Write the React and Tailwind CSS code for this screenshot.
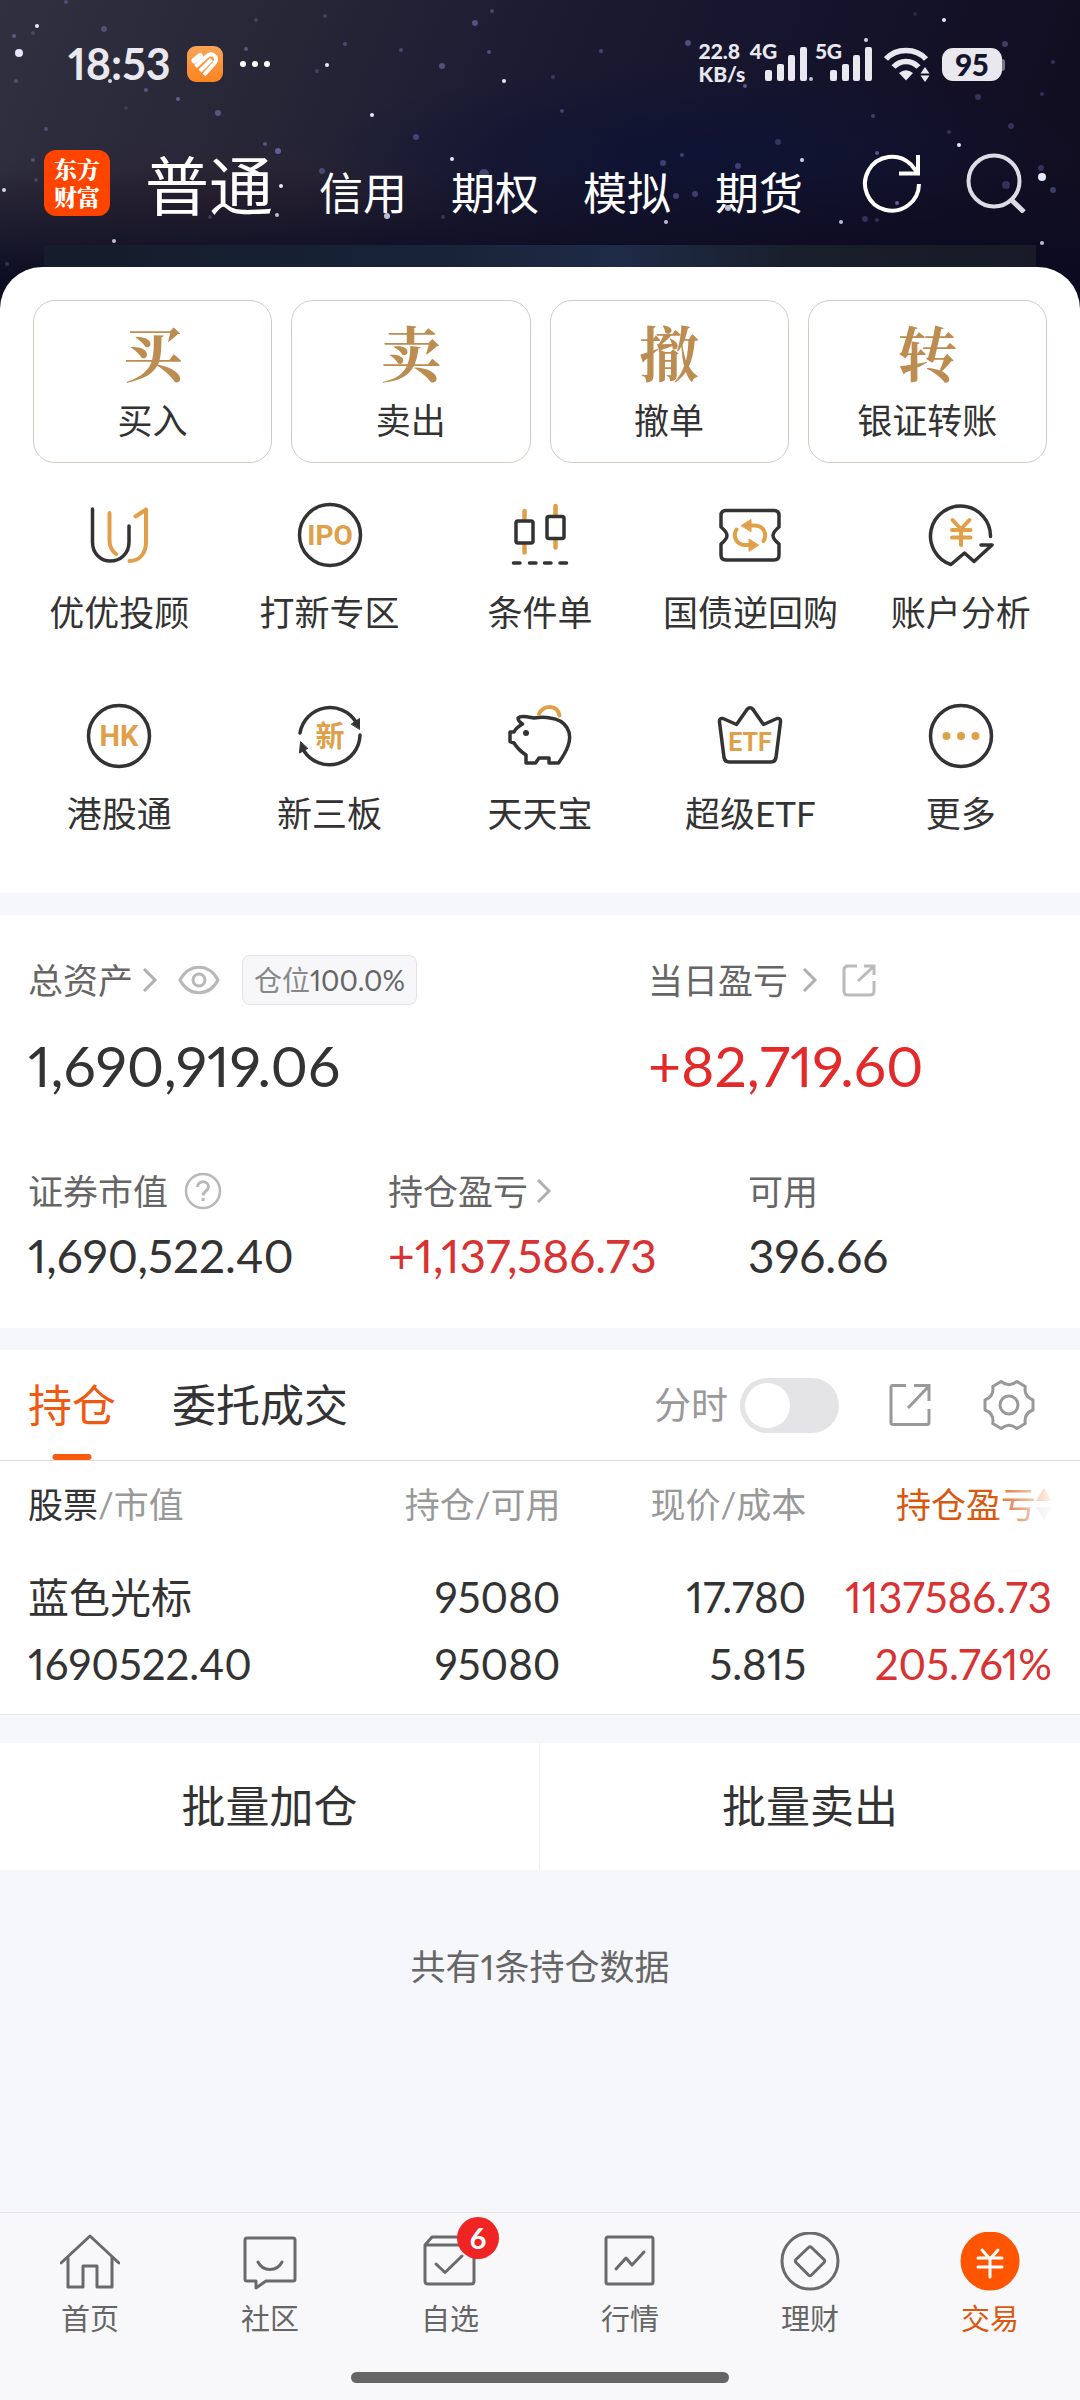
import React from "react";

const DARK = "#333333";
const GOLD = "#e0a04a";

const STARS = [
  [19, 53, 4, 1], [37, 26, 2, 1], [104, 29, 3, 0.4], [66, 2, 2, 0.4], [14, 36, 2, 0.5], [33, 33, 2, 0.3], [16, 81, 2, 0.4],
  [110, 81, 2, 0.9], [146, 90, 2, 0.5], [178, 99, 2, 0.6], [218, 113, 3, 0.5], [46, 129, 2, 0.4], [126, 108, 2, 0.2],
  [256, 20, 2, 0.3], [246, 49, 2, 0.5], [327, 65, 2, 1], [317, 71, 2, 0.3], [345, 44, 2, 0.4], [325, 16, 2, 0.3],
  [401, 50, 2, 0.4], [442, 66, 3, 0.5], [504, 81, 2, 1], [475, 23, 3, 0.5], [492, 11, 2, 0.4], [489, 52, 2, 0.5],
  [372, 115, 2, 1], [416, 137, 3, 0.4], [452, 159, 2, 1], [278, 151, 3, 0.6], [265, 144, 2, 0.5], [281, 186, 2, 1],
  [322, 171, 3, 0.4], [387, 216, 3, 0.8], [277, 215, 2, 0.8], [210, 217, 2, 0.3], [114, 241, 2, 0.8], [4, 190, 2, 0.9],
  [33, 160, 2, 0.4], [36, 180, 2, 0.3], [484, 174, 5, 0.4], [443, 217, 2, 0.3], [688, 43, 3, 0.5], [601, 51, 2, 0.4],
  [745, 86, 2, 0.6], [811, 79, 2, 0.8], [866, 40, 2, 0.9], [944, 20, 2, 1], [1005, 44, 3, 0.4], [915, 14, 2, 0.2],
  [1053, 62, 2, 0.3], [978, 97, 3, 0.3], [778, 142, 3, 0.3], [802, 160, 2, 0.9], [877, 153, 2, 0.6], [959, 145, 2, 1],
  [1042, 177, 4, 1], [1053, 190, 3, 0.4], [1041, 168, 3, 0.3], [682, 155, 2, 0.4], [663, 163, 3, 0.4], [738, 166, 3, 0.4],
  [695, 194, 3, 0.4], [676, 196, 3, 0.4], [666, 222, 2, 0.8], [841, 222, 2, 0.8], [865, 219, 3, 0.3], [877, 220, 2, 0.3],
  [728, 208, 3, 0.8], [897, 203, 2, 0.7], [1042, 243, 2, 0.8], [562, 111, 2, 0.4], [873, 116, 2, 0.4], [1011, 126, 3, 0.3],
  [1042, 94, 2, 0.3], [949, 132, 2, 0.3], [1006, 185, 4, 0.3], [553, 77, 2, 0.3], [7, 264, 2, 0.3],
];

function NightSky() {
  return (
    <svg className="absolute inset-0 h-full w-full" viewBox="0 0 1080 309" preserveAspectRatio="xMidYMid slice" aria-hidden="true">
      <defs>
        <linearGradient id="sky" x1="0" y1="0" x2="1" y2="0.12">
          <stop offset="0" stopColor="#30303f" />
          <stop offset="0.28" stopColor="#272637" />
          <stop offset="0.5" stopColor="#1c1b32" />
          <stop offset="0.75" stopColor="#15142c" />
          <stop offset="1" stopColor="#120e22" />
        </linearGradient>
        <linearGradient id="dusk" x1="0" y1="0" x2="0" y2="1">
          <stop offset="0.55" stopColor="#0a0a20" stopOpacity="0" />
          <stop offset="0.9" stopColor="#0a0a20" stopOpacity="0.9" />
        </linearGradient>
        <radialGradient id="blue">
          <stop offset="0" stopColor="#0d1334" stopOpacity="0.9" />
          <stop offset="1" stopColor="#0d1334" stopOpacity="0" />
        </radialGradient>
        <radialGradient id="ember">
          <stop offset="0" stopColor="#2c222f" stopOpacity="0.8" />
          <stop offset="1" stopColor="#2c222f" stopOpacity="0" />
        </radialGradient>
        <linearGradient id="strip" x1="0" y1="0" x2="1" y2="0">
          <stop offset="0" stopColor="#151c2b" />
          <stop offset="0.4" stopColor="#182338" />
          <stop offset="0.58" stopColor="#1e2b47" />
          <stop offset="0.75" stopColor="#191f2c" />
          <stop offset="1" stopColor="#181b27" />
        </linearGradient>
      </defs>
      <rect width="1080" height="309" fill="url(#sky)" />
      <ellipse cx="700" cy="155" rx="380" ry="90" fill="url(#blue)" />
      <ellipse cx="200" cy="200" rx="260" ry="60" fill="url(#ember)" />
      <rect width="1080" height="309" fill="url(#dusk)" />
      <rect x="44" y="245" width="992" height="64" fill="url(#strip)" />
      {STARS.map(([x, y, r, o]) => (
        <circle key={`${x}-${y}`} cx={x} cy={y} r={r} fill={o > 0.7 ? "#e6e8ff" : "#8585cc"} opacity={o} />
      ))}
    </svg>
  );
}

function SignalBars() {
  return (
    <svg width="42" height="34" viewBox="0 0 42 34" fill="#e9e8ee" aria-hidden="true">
      <rect x="0" y="23" width="7" height="11" rx="2" />
      <rect x="12" y="17" width="7" height="17" rx="2" />
      <rect x="23" y="8" width="7" height="26" rx="2" />
      <rect x="35" y="0" width="7" height="34" rx="2" />
    </svg>
  );
}

function StatusBar() {
  return (
    <div className="flex h-11 items-center pr-[75px] pl-[68px] text-[#e9e8ee]">
      <span className="text-[43px] leading-[44px] font-bold">18:53</span>
      <svg className="ml-4" width="36" height="36" viewBox="0 0 36 36" aria-hidden="true">
        <defs>
          <linearGradient id="app" x1="0" y1="0" x2="0" y2="1">
            <stop offset="0" stopColor="#f9a456" />
            <stop offset="1" stopColor="#fb8420" />
          </linearGradient>
        </defs>
        <rect width="36" height="36" rx="9" fill="url(#app)" />
        <g fill="none" stroke="#fff" strokeWidth="4" strokeLinecap="butt">
          <path d="M7.500 14.500 L13 10" strokeWidth="6" strokeLinecap="round" />
          <path d="M8.500 20.500 L19.500 10.500 C24 6 32 10 28 16.500 L17 29" />
          <path d="M13 25 L24.500 13.500" />
        </g>
      </svg>
      <svg className="ml-4" width="32" height="8" viewBox="0 0 32 8" fill="#fff" aria-hidden="true">
        <circle cx="4" cy="4" r="3" />
        <circle cx="16" cy="4" r="3" />
        <circle cx="28" cy="4" r="3" />
      </svg>
      <div className="ml-auto flex items-start">
        <div className="-mt-1 text-[21px] leading-[23px] font-black">
          <div>22.8</div>
          <div>KB/s</div>
        </div>
        <div className="-mt-1 ml-1 text-[21px] leading-[23px] font-black">4G</div>
        <div className="-ml-3 pt-1"><SignalBars /></div>
        <div className="-mt-1 ml-2 text-[21px] leading-[23px] font-black">5G</div>
        <div className="-ml-3 pt-1"><SignalBars /></div>
        <svg className="mt-1 ml-3" width="46" height="35" viewBox="0 0 46 35" aria-hidden="true">
          <g fill="none" stroke="#e9e8ee" strokeWidth="5.500">
            <path d="M2 12 C12 0.500 32 0.500 42 12" />
            <path d="M9.500 20 C16 12.500 28 12.500 34.500 20" />
          </g>
          <path d="M15 26 Q22 20.500 29 26 L22 33.500Z" fill="#e9e8ee" />
          <path d="M41 20 L45.500 26.500 H36.500Z M41 35 L45.500 28.500 H36.500Z" fill="#e9e8ee" />
        </svg>
        <div className="mt-[5px] ml-3 flex items-center">
          <span className="flex h-[33px] w-[60px] items-center justify-center rounded-[11px] bg-[#e9e8ee] text-[30px] leading-[33px] font-black text-[#14152d]">95</span>
          <span className="h-3 w-[3px] rounded-r-sm bg-[#77768a]" />
        </div>
      </div>
    </div>
  );
}

function Header() {
  return (
    <header className="relative bg-[#11122d] pt-[42px] pb-[90px]">
      <NightSky />
      <div className="relative">
        <StatusBar />
        <div className="mt-[61px] flex h-[72px] items-center pr-[54px] pl-11 text-white">
          <div className="flex size-[66px] shrink-0 flex-col items-center justify-center rounded-xl bg-[#ff4400] font-[Lato,'Noto_Serif_CJK_SC','Noto_Sans_CJK_SC',serif] text-[23px] leading-[28px] font-black">
            <span>东方</span>
            <span>财富</span>
          </div>
          <nav className="ml-[35px] flex items-baseline gap-11 pt-3 text-[44px] leading-[72px]">
            <a href="#normal" className="mr-[2px] text-[64px]">普通</a>
            <a href="#credit">信用</a>
            <a href="#option">期权</a>
            <a href="#sim">模拟</a>
            <a href="#future">期货</a>
          </nav>
          <button type="button" aria-label="刷新" className="ml-auto">
            <svg width="60" height="60" viewBox="0 0 60 60" fill="none" stroke="#fff" strokeWidth="4">
              <path d="M57 31 A27 27 0 1 1 49 11.500 L55 19" />
              <path d="M56 2 V20.500 H37" />
            </svg>
          </button>
          <button type="button" aria-label="搜索" className="ml-[44px]">
            <svg width="60" height="60" viewBox="0 0 60 60" fill="none" stroke="#dddce4" strokeWidth="4">
              <circle cx="28" cy="28" r="25.500" />
              <path d="M45 46.500 L58 59" strokeWidth="5" />
            </svg>
          </button>
        </div>
      </div>
    </header>
  );
}

const ACTIONS = [
  ["买", "买入"],
  ["卖", "卖出"],
  ["撤", "撤单"],
  ["转", "银证转账"],
];

const IconText = ({ size, y, children }) => (
  <text x="0" y={y} textAnchor="middle" fontSize={size} fontWeight="700" fontFamily='Roboto, "Noto Sans CJK SC", sans-serif' fill={GOLD} stroke="none">
    {children}
  </text>
);

const TOOLS = [
  ["优优投顾", (
    <>
      <path d="M-26.500-26V7C-26.500 19-18 26-8.500 26S10 19 10 7V-9" />
      <path stroke={GOLD} strokeWidth="4" d="M-9.500-22V5C-9.500 12-7 16-3 19M16.500-18.500L27-25.500V7C27 19 20 26 10.500 26" />
    </>
  )],
  ["打新专区", (
    <>
      <circle r="30.500" />
      <IconText size="28" y="10">IPO</IconText>
    </>
  )],
  ["条件单", (
    <>
      <path stroke={GOLD} strokeWidth="4.500" d="M-15.500-24V-16M-15.500 10V17.500M15.500-29V-20M15.500 5V12.500" />
      <rect x="-24" y="-14" width="17" height="22" rx="2" />
      <rect x="7" y="-18.500" width="17" height="22" rx="2" />
      <path d="M-26.500 28H-20M-10.500 28H-4M4.500 28H11M20 28H26.500" />
    </>
  )],
  ["国债逆回购", (
    <>
      <path d="M-24-24.500H24Q29-24.500 29-19.500V-8Q23-3 23 .5T29 9V20Q29 25 24 25H-24Q-29 25-29 20V9Q-23 4-23 .5T-29-8V-19.500Q-29-24.500-24-24.500Z" />
      <g stroke={GOLD} fill={GOLD}>
        <path fill="none" strokeWidth="4" d="M-2-9.500H4C15-9.500 17 0 13.500 6M2 10H-4C-15 10-17 0-13.500-5.500" />
        <path strokeWidth="1" d="M-8.500-9.500L1-15.500V-3.500ZM8.500 10L-1 4V16Z" />
      </g>
    </>
  )],
  ["账户分析", (
    <>
      <path d="M29.500 1.500A30 30 0 1 0-10 29.500L3.500 18L13 26.500L31 10H20" />
      <path stroke={GOLD} strokeWidth="4" d="M-8.500-15L0-6L8.500-15M0-6V10M-9-5H9.500M-9 2.500H9.500" />
    </>
  )],
  ["港股通", (
    <>
      <circle r="30.500" />
      <IconText size="29" y="10">HK</IconText>
    </>
  )],
  ["新三板", (
    <>
      <path d="M-30-3A30.500 30.500 0 0 1 26-14M30-1A30.500 30.500 0 0 1-26 15" />
      <path fill={DARK} strokeWidth="1" d="M21.500-12L29.500-17.500L29.500-7ZM-22.500 12.500L-30.500 17L-29.500 6Z" />
      <IconText size="29" y="11">新</IconText>
    </>
  )],
  ["天天宝", (
    <>
      <path d="M-22-18C-19-21-12-19-6-18C0-19 6-19 10-18C26-16 33-4 28 10C26 16 22 22 18.500 27H9V22H-1L-4.500 27H-14V19C-20 15-23 12-26 7L-30 5.500V-4H-26C-24-8-21-10-17.500-12Q-22-15-22-18Z" />
      <circle cx="-14" cy="-3" r="3" fill={DARK} stroke="none" />
      <path stroke={GOLD} strokeWidth="4" d="M-1-22C3-31 17-32 19.500-20.500" />
    </>
  )],
  ["超级ETF", (
    <>
      <path d="M-27-17.500L-13.500-11.500L-3-26.500Q0-30 3-26.500L13.500-11.500L27-17.500Q31-18 30.500-14L26 21.500Q25 26 21 26H-21Q-25 26-26 21.500L-30.500-14Q-31-18-27-17.500Z" />
      <IconText size="25" y="15">ETF</IconText>
    </>
  )],
  ["更多", (
    <>
      <circle r="30.500" />
      <g fill={GOLD} stroke="none">
        <circle cx="-14.500" r="4" />
        <circle r="4" />
        <circle cx="14.500" r="4" />
      </g>
    </>
  )],
];

function Chevron() {
  return (
    <svg width="16" height="24" viewBox="0 0 16 24" fill="none" stroke="#b0b0b0" strokeWidth="3" aria-hidden="true">
      <path d="M2 1L13 12L2 23" />
    </svg>
  );
}

function Assets() {
  return (
    <section className="bg-white pt-10 pb-11 text-[#333]">
      <div className="flex">
        <div className="w-3/5 pl-7">
          <div className="flex h-[50px] items-center text-[35px] leading-[50px] text-[#666]">
            <a href="#assets" className="flex items-center gap-[9px]">总资产<Chevron /></a>
            <button type="button" aria-label="隐藏金额" className="ml-5">
              <svg width="42" height="30" viewBox="0 0 42 30" fill="none" stroke="#b8b8b8" strokeWidth="3">
                <path d="M2 15C11-2 31-2 40 15C31 32 11 32 2 15Z" />
                <circle cx="21" cy="15" r="6" />
              </svg>
            </button>
            <span className="ml-[22px] rounded-lg border border-[#e2e3e6] bg-[#f7f7fa] px-[11px] text-[28px] leading-[48px]">
              <span className="text-[#888]">仓位</span>100.0%
            </span>
          </div>
          <div className="mt-[25px] text-[57px] leading-[70px]">1,690,919.06</div>
        </div>
        <div className="w-2/5">
          <div className="flex h-[50px] items-center text-[35px] leading-[50px] text-[#666]">
            <a href="#today" className="flex items-center gap-[14px]">当日盈亏<Chevron /></a>
            <button type="button" aria-label="分享当日盈亏" className="ml-6">
              <svg width="34" height="34" viewBox="0 0 34 34" fill="none" stroke="#bbb" strokeWidth="3">
                <path d="M15 3H6Q2 3 2 7V28Q2 32 6 32H28Q32 32 32 28V18M22 3H32V12M31 4L16 18" />
              </svg>
            </button>
          </div>
          <div className="mt-[25px] text-[57px] leading-[70px] text-[#e32a2a]">+82,719.60</div>
        </div>
      </div>
      <div className="mt-[71px] grid grid-cols-3 text-[46px] leading-[56px]">
        <div className="pl-7">
          <div className="mb-[17px] flex h-10 items-center gap-4 text-[35px] leading-10 text-[#666]">
            证券市值
            <button type="button" aria-label="证券市值说明">
              <svg width="38" height="38" viewBox="0 0 38 38" fill="none" stroke="#b8b8b8" strokeWidth="2.500">
                <circle cx="19" cy="19" r="17" />
                <path d="M13.500 15C13.500 8 24.500 8 24.500 15C24.500 19 19 19 19 23.500M19 26V29" strokeWidth="3" />
              </svg>
            </button>
          </div>
          <div>1,690,522.40</div>
        </div>
        <div className="pl-7">
          <a href="#profit" className="mb-[17px] flex h-10 items-center gap-2 text-[35px] leading-10 text-[#666]">持仓盈亏<Chevron /></a>
          <div className="text-[#d93232]">+1,137,586.73</div>
        </div>
        <div className="pl-7">
          <div className="mb-[17px] h-10 text-[35px] leading-10 text-[#666]">可用</div>
          <div>396.66</div>
        </div>
      </div>
    </section>
  );
}

function Holdings() {
  return (
    <section className="bg-white text-[#333]">
      <div className="flex h-[111px] items-center border-b border-[#dedede] pr-[45px] pl-7 text-[44px] leading-[60px]">
        <button type="button" className="relative h-full text-[#ee5a12]">
          持仓
          <span className="absolute bottom-0 left-1/2 h-[6px] w-[39px] -translate-x-1/2 rounded-full bg-[#f95a0c]" />
        </button>
        <button type="button" className="ml-14">委托成交</button>
        <label className="ml-auto flex items-center gap-3 text-[37px] text-[#999]">
          分时
          <input
            type="checkbox"
            role="switch"
            className="flex h-[55px] w-[99px] appearance-none items-center rounded-full bg-[#e4e4e7] p-[5px] before:size-[45px] before:rounded-full before:bg-white before:content-[''] checked:justify-end checked:bg-[#f95a0c]"
          />
        </label>
        <button type="button" aria-label="分享持仓" className="ml-[50px]">
          <svg width="42" height="44" viewBox="0 0 42 44" fill="none" stroke="#999" strokeWidth="3">
            <path d="M17 2.500H4Q2 2.500 2 4.500V39.500Q2 41.500 4 41.500H38Q40 41.500 40 39.500V26M25 2.500H40V18M39 4L19 25" />
          </svg>
        </button>
        <button type="button" aria-label="设置" className="ml-[52px]">
          <svg width="52" height="52" viewBox="-26 -26 52 52" fill="none" stroke="#999" strokeWidth="3" strokeLinejoin="round">
            <path d="M24-5V5Q14.500 8.700 16.300 18.500L7.900 23.500Q0 17 -7.900 23.500L-16.300 18.500Q-14.500 8.700 -24 5V-5Q-14.500-8.700 -16.300-18.500L-7.900-23.500Q0-17 7.900-23.500L16.300-18.500Q14.500-8.700 24-5Z" />
            <circle r="9" />
          </svg>
        </button>
      </div>
      <div className="border-b border-[#ebebed] px-7">
        <table className="w-full table-fixed text-right text-[42px] leading-[67px]">
          <thead>
            <tr className="h-[86px] text-[35px] text-[#999]">
              <th className="w-[28%] text-left font-normal"><span className="text-[#333]">股票</span>/市值</th>
              <th className="w-[24%] font-normal">持仓/可用</th>
              <th className="w-[24%] font-normal">现价/成本</th>
              <th className="w-[24%] font-normal text-[#d9580f]">
                <div className="relative flex items-center justify-end">
                  持仓盈亏
                  <svg width="16" height="34" viewBox="0 0 16 34" aria-hidden="true">
                    <path d="M8 1L16 14H0Z" fill="#ee5a12" />
                    <path d="M8 33L16 20H0Z" fill="#ccc" />
                  </svg>
                  <span className="absolute inset-y-0 right-0 w-14 bg-linear-to-r from-white/10 to-white/95" />
                </div>
              </th>
            </tr>
          </thead>
          <tbody>
            <tr>
              <td className="pt-[17px] pb-4 text-left"><div className="text-[41px]">蓝色光标</div>1690522.40</td>
              <td className="pt-[17px] pb-4">95080<br />95080</td>
              <td className="pt-[17px] pb-4">17.780<br />5.815</td>
              <td className="pt-[17px] pb-4 text-[#d93232]">1137586.73<br />205.761%</td>
            </tr>
          </tbody>
        </table>
      </div>
    </section>
  );
}

const TABS = [
  ["首页", <path d="M-29 1L0-26L29 1M-22-5V25H-7V4H7V25H22V-5" />],
  ["社区", <path d="M-23-24H23Q25-24 25-22V17Q25 19 23 19H-4L-14 26V19H-23Q-25 19-25 17V-22Q-25-24-23-24ZM-12 0C-7 10 7 10 12 0" />],
  ["自选", <path d="M-25-17V19Q-25 22-22 22H21Q24 22 24 19V-17ZL-18-25H17L24-17M-14 2L-5 10.500L12-6" />],
  ["行情", <path d="M-22-25H21Q23-25 23-23V20Q23 22 21 22H-22Q-24 22-24 20V-23Q-24-25-22-25ZM-14 7L-4-4L2 3L14-10" />],
  ["理财", <path d="M28-1A28 28 0 1 1-28-1A28 28 0 1 1 28-1ZM-1.500-14.500Q0-16 1.500-14.500L14-2.500Q15.500-1 14 .5L1.500 13Q0 14.500-1.500 13L-14 .5Q-15.500-1-14-2.500Z" />],
  ["交易", (
    <>
      <circle cy="-1" r="28" fill="#ff5500" stroke="#ff5500" />
      <path stroke="#fff" d="M-8-12L0-3L8-12M0-3V15M-12-4H12M-12 5H12" />
    </>
  )],
];

function TabBar() {
  return (
    <nav className="border-t border-[#e2e3e5] bg-[#f8f8fa] pt-[19px] pb-[17px]">
      <div className="grid grid-cols-6">
        {TABS.map(([name, icon]) => (
          <a
            key={name}
            href={`#${name}`}
            className={`flex flex-col items-center gap-[7px] text-[29px] leading-10 ${name === "交易" ? "text-[#d9580f]" : "text-[#666]"}`}
          >
            <span className="relative">
              <svg width="60" height="60" viewBox="-30 -30 60 60" fill="none" stroke="#6a6a6a" strokeWidth="3" strokeLinejoin="round" strokeLinecap="round" aria-hidden="true">
                {icon}
              </svg>
              {name === "自选" && (
                <span className="absolute -top-[15px] left-[37px] flex size-[42px] items-center justify-center rounded-full bg-[#f12424] text-[29px] font-bold text-white">6</span>
              )}
            </span>
            {name}
          </a>
        ))}
      </div>
      <div className="mx-auto mt-[33px] h-[11px] w-[35%] rounded-full bg-[#666]" />
    </nav>
  );
}

export default function App() {
  return (
    <div className="flex min-h-screen flex-col bg-[#f6f7fa] font-[Lato,'Noto_Sans_CJK_SC',sans-serif] proportional-nums">
      <Header />
      <main className="relative -mt-[42px] flex flex-1 flex-col">
        <section className="rounded-t-[42px] bg-white px-[14px] pt-[33px] pb-[52px] text-[35px] text-[#333]">
          <div className="grid grid-cols-4 gap-[19px] px-[19px]">
            {ACTIONS.map(([mark, label]) => (
              <button key={label} type="button" className="flex h-[163px] flex-col items-center rounded-[22px] border border-[#d3cbc3] pt-[17px]">
                <span className="font-['Noto_Serif_CJK_SC','Noto_Sans_CJK_SC',serif] text-[60px] leading-[66px] font-bold text-[#bd8c50]">{mark}</span>
                <span className="mt-4 leading-10">{label}</span>
              </button>
            ))}
          </div>
          <div className="mt-9 grid grid-cols-5 gap-y-[60px]">
            {TOOLS.map(([label, icon]) => (
              <a key={label} href={`#${label}`} className="flex flex-col items-center gap-[14px] leading-[55px]">
                <svg width="72" height="72" viewBox="-36 -36 72 72" fill="none" stroke={DARK} strokeWidth="3.500" strokeLinecap="round" strokeLinejoin="round" aria-hidden="true">
                  {icon}
                </svg>
                {label}
              </a>
            ))}
          </div>
        </section>
        <div className="mt-[22px]"><Assets /></div>
        <div className="mt-[22px]"><Holdings /></div>
        <div className="mt-7 grid grid-cols-2 divide-x divide-[#f0f0f2] bg-white text-[44px] leading-[127px] text-[#333]">
          <button type="button">批量加仓</button>
          <button type="button">批量卖出</button>
        </div>
        <p className="mt-[71px] text-center text-[35px] leading-[50px] text-[#666]">共有1条持仓数据</p>
      </main>
      <TabBar />
    </div>
  );
}
